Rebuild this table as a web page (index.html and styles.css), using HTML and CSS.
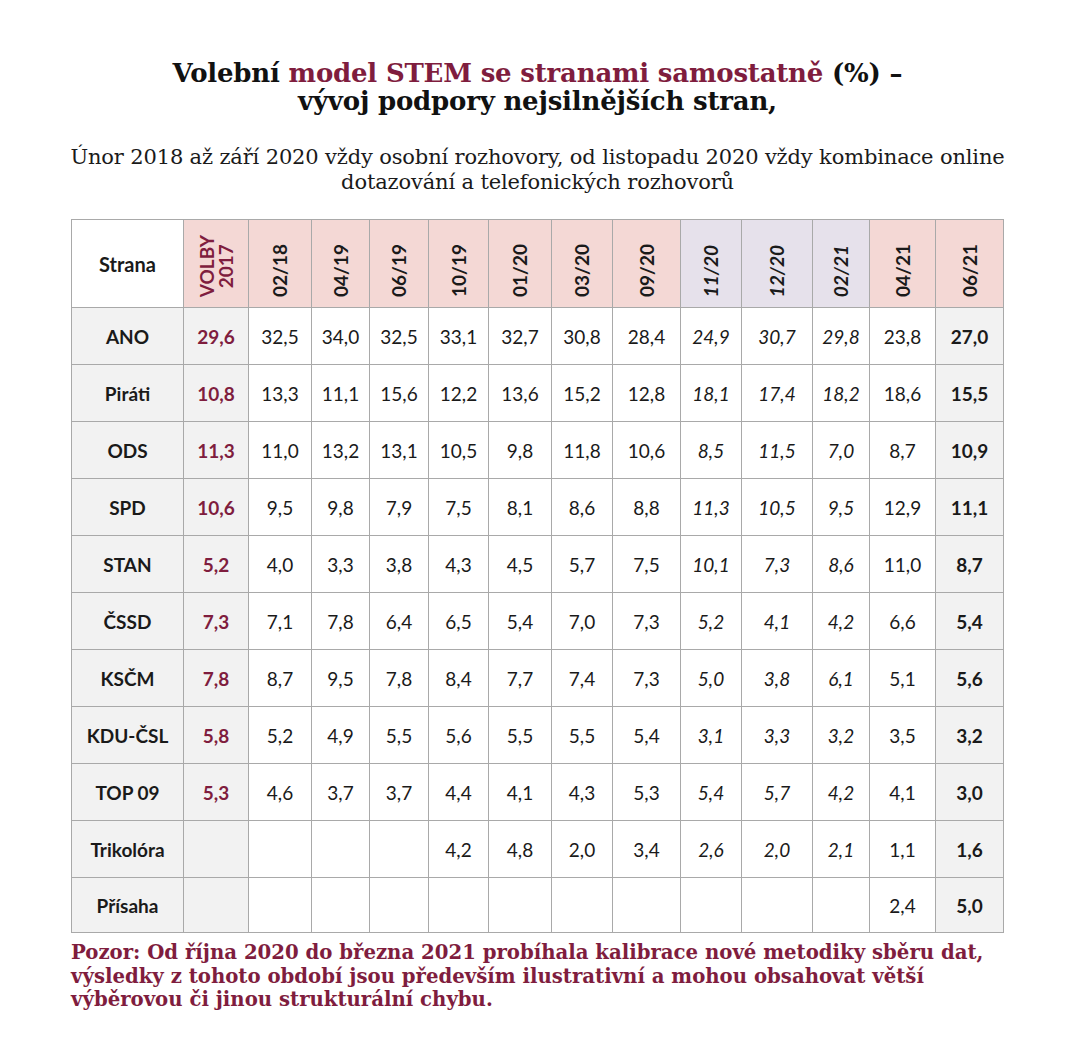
FILE: index.html
```html
<!DOCTYPE html>
<html lang="cs">
<head>
<meta charset="utf-8">
<title>Volební model STEM</title>
<link rel="stylesheet" href="styles.css">
</head>
<body>
<div class="page">
  <h1 class="title">Volební <span class="accent">model STEM se stranami samostatně</span> (%) –<br>vývoj podpory nejsilnějších stran,</h1>
  <p class="subtitle">Únor 2018 až září 2020 vždy osobní rozhovory, od listopadu 2020 vždy kombinace online<br>dotazování a telefonických rozhovorů</p>
  <table class="grid">
    <colgroup>
      <col style="width:112px"><col style="width:65px"><col style="width:63px"><col style="width:58px"><col style="width:59px"><col style="width:60px"><col style="width:63px"><col style="width:61px"><col style="width:68px"><col style="width:61px"><col style="width:71px"><col style="width:57px"><col style="width:66px"><col style="width:68px">
    </colgroup>
    <thead>
      <tr class="head">
        <th class="name-h">Strana</th>
        <th class="pink volby"><span class="rot">VOLBY<br>2017</span></th>
        <th class="pink"><span class="rot">02/18</span></th>
        <th class="pink"><span class="rot">04/19</span></th>
        <th class="pink"><span class="rot">06/19</span></th>
        <th class="pink"><span class="rot">10/19</span></th>
        <th class="pink"><span class="rot">01/20</span></th>
        <th class="pink"><span class="rot">03/20</span></th>
        <th class="pink"><span class="rot">09/20</span></th>
        <th class="lav it"><span class="rot">11/20</span></th>
        <th class="lav it"><span class="rot">12/20</span></th>
        <th class="lav it"><span class="rot">02/21</span></th>
        <th class="pink"><span class="rot">04/21</span></th>
        <th class="pink"><span class="rot">06/21</span></th>
      </tr>
    </thead>
    <tbody>
      <tr><th>ANO</th><td class="v">29,6</td><td>32,5</td><td>34,0</td><td>32,5</td><td>33,1</td><td>32,7</td><td>30,8</td><td>28,4</td><td class="it">24,9</td><td class="it">30,7</td><td class="it">29,8</td><td>23,8</td><td class="last">27,0</td></tr>
      <tr><th>Piráti</th><td class="v">10,8</td><td>13,3</td><td>11,1</td><td>15,6</td><td>12,2</td><td>13,6</td><td>15,2</td><td>12,8</td><td class="it">18,1</td><td class="it">17,4</td><td class="it">18,2</td><td>18,6</td><td class="last">15,5</td></tr>
      <tr><th>ODS</th><td class="v">11,3</td><td>11,0</td><td>13,2</td><td>13,1</td><td>10,5</td><td>9,8</td><td>11,8</td><td>10,6</td><td class="it">8,5</td><td class="it">11,5</td><td class="it">7,0</td><td>8,7</td><td class="last">10,9</td></tr>
      <tr><th>SPD</th><td class="v">10,6</td><td>9,5</td><td>9,8</td><td>7,9</td><td>7,5</td><td>8,1</td><td>8,6</td><td>8,8</td><td class="it">11,3</td><td class="it">10,5</td><td class="it">9,5</td><td>12,9</td><td class="last">11,1</td></tr>
      <tr><th>STAN</th><td class="v">5,2</td><td>4,0</td><td>3,3</td><td>3,8</td><td>4,3</td><td>4,5</td><td>5,7</td><td>7,5</td><td class="it">10,1</td><td class="it">7,3</td><td class="it">8,6</td><td>11,0</td><td class="last">8,7</td></tr>
      <tr><th>ČSSD</th><td class="v">7,3</td><td>7,1</td><td>7,8</td><td>6,4</td><td>6,5</td><td>5,4</td><td>7,0</td><td>7,3</td><td class="it">5,2</td><td class="it">4,1</td><td class="it">4,2</td><td>6,6</td><td class="last">5,4</td></tr>
      <tr><th>KSČM</th><td class="v">7,8</td><td>8,7</td><td>9,5</td><td>7,8</td><td>8,4</td><td>7,7</td><td>7,4</td><td>7,3</td><td class="it">5,0</td><td class="it">3,8</td><td class="it">6,1</td><td>5,1</td><td class="last">5,6</td></tr>
      <tr><th>KDU-ČSL</th><td class="v">5,8</td><td>5,2</td><td>4,9</td><td>5,5</td><td>5,6</td><td>5,5</td><td>5,5</td><td>5,4</td><td class="it">3,1</td><td class="it">3,3</td><td class="it">3,2</td><td>3,5</td><td class="last">3,2</td></tr>
      <tr><th>TOP 09</th><td class="v">5,3</td><td>4,6</td><td>3,7</td><td>3,7</td><td>4,4</td><td>4,1</td><td>4,3</td><td>5,3</td><td class="it">5,4</td><td class="it">5,7</td><td class="it">4,2</td><td>4,1</td><td class="last">3,0</td></tr>
      <tr><th>Trikolóra</th><td class="v"></td><td></td><td></td><td></td><td>4,2</td><td>4,8</td><td>2,0</td><td>3,4</td><td class="it">2,6</td><td class="it">2,0</td><td class="it">2,1</td><td>1,1</td><td class="last">1,6</td></tr>
      <tr><th>Přísaha</th><td class="v"></td><td></td><td></td><td></td><td></td><td></td><td></td><td></td><td class="it"></td><td class="it"></td><td class="it"></td><td>2,4</td><td class="last">5,0</td></tr>
    </tbody>
  </table>
  <p class="note">Pozor: Od října 2020 do března 2021 probíhala kalibrace nové metodiky sběru dat,<br>výsledky z tohoto období jsou především ilustrativní a mohou obsahovat větší<br>výběrovou či jinou strukturální chybu.</p>
</div>
</body>
</html>
```
FILE: styles.css
```css
html, body {
  margin: 0;
  padding: 0;
  background: #ffffff;
}

.page {
  padding: 59px 0 0 71px;
  width: 933px;
}

.title {
  margin: 0;
  text-align: center;
  font-family: "DejaVu Serif", "Liberation Serif", serif;
  font-weight: bold;
  font-size: 26px;
  line-height: 28px;
  color: #111111;
  letter-spacing: -0.2px;
}

.accent {
  color: #7f1d3e;
}

.subtitle {
  margin: 30px -20px 0 -20px;
  text-align: center;
  white-space: nowrap;
  font-family: "DejaVu Serif", "Liberation Serif", serif;
  font-size: 21px;
  line-height: 25px;
  color: #1a1a1a;
  letter-spacing: -0.15px;
}

.grid {
  margin-top: 24px;
  border-collapse: collapse;
  table-layout: fixed;
  width: 933px;
  font-family: Lato, "Open Sans", "Liberation Sans", sans-serif;
  font-size: 19px;
  color: #1a1a1a;
}

.grid th, .grid td {
  border: 1px solid #a9a9a9;
  text-align: center;
  padding: 0;
}

.grid tbody tr {
  height: 57px;
}

.grid tbody tr:last-child {
  height: 55px;
}

.grid tbody th {
  background: #f2f2f2;
  font-weight: bold;
}

.grid td.v {
  background: #f2f2f2;
  color: #7f1d3e;
  font-weight: bold;
}

.grid td.last {
  background: #f2f2f2;
  font-weight: bold;
}

.it {
  font-style: italic;
}

.head {
  height: 88px;
}

.head th {
  vertical-align: bottom;
  padding-bottom: 6px;
  font-weight: bold;
}

.head th.name-h {
  vertical-align: middle;
  padding-bottom: 0;
  background: #ffffff;
  font-size: 20px;
}

.pink {
  background: #f4d8d5;
}

.lav {
  background: #e6e1eb;
}

.rot {
  display: inline-block;
  writing-mode: vertical-rl;
  transform: rotate(180deg);
  line-height: 20px;
}

.volby .rot {
  color: #7f1d3e;
  line-height: 19px;
}

.note {
  margin: 8px 0 0 0;
  font-family: "DejaVu Serif", "Liberation Serif", serif;
  font-weight: bold;
  font-size: 19.7px;
  line-height: 23.5px;
  color: #7f1d3e;
  letter-spacing: 0;
}
```
